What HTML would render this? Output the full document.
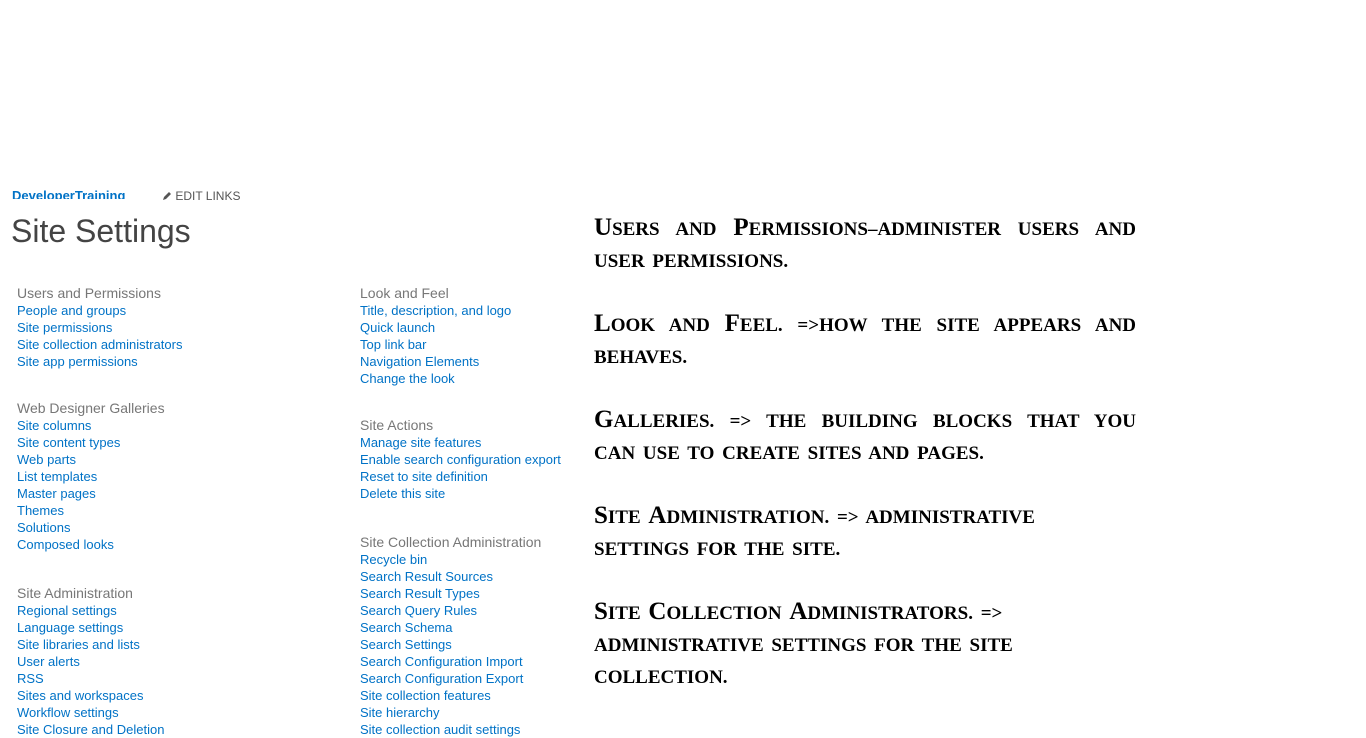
<!DOCTYPE html>
<html><head><meta charset="utf-8"><style>
body{margin:0;width:1366px;height:728px;overflow:hidden;background:#fff;font-family:"Liberation Sans",sans-serif;position:relative}
.a{position:absolute}
.col div{font-size:13px;line-height:17px;color:#0072c6;white-space:nowrap}
.col div.h{font-size:14px;color:#777;line-height:17px}
.r{position:absolute;left:594px;top:214px;width:542px;font-family:"Liberation Serif",serif;font-weight:bold;text-transform:uppercase;font-size:19px;line-height:32px;text-align:justify;color:#000;word-spacing:3px}
.r p{margin:0 0 32px 0;height:64px}
.r b{font-size:25px;line-height:1}
</style></head><body>
<div class="a" style="left:12px;top:187px;font-size:13px;color:#0072c6;font-weight:bold;height:12px;overflow:hidden;line-height:18px">DeveloperTraining</div>
<div class="a" style="left:162px;top:189px;font-size:12px;color:#555;line-height:14px"><svg width="10" height="10" style="vertical-align:-1px" viewBox="0 0 10 10"><path d="M1 9L2 6L7 1L9 3L4 8Z" fill="#555"/></svg>&nbsp;EDIT LINKS</div>
<div class="a" style="left:11px;top:211px;font-size:32px;color:#444;line-height:40px">Site Settings</div>
<div class="a col" style="left:17px;top:285px">
<div class="h">Users and Permissions</div>
<div>People and groups</div><div>Site permissions</div><div>Site collection administrators</div><div>Site app permissions</div>
<div style="height:30px"></div>
<div class="h">Web Designer Galleries</div>
<div>Site columns</div><div>Site content types</div><div>Web parts</div><div>List templates</div><div>Master pages</div><div>Themes</div><div>Solutions</div><div>Composed looks</div>
<div style="height:32px"></div>
<div class="h">Site Administration</div>
<div>Regional settings</div><div>Language settings</div><div>Site libraries and lists</div><div>User alerts</div><div>RSS</div><div>Sites and workspaces</div><div>Workflow settings</div><div>Site Closure and Deletion</div>
</div>
<div class="a col" style="left:360px;top:285px">
<div class="h">Look and Feel</div>
<div>Title, description, and logo</div><div>Quick launch</div><div>Top link bar</div><div>Navigation Elements</div><div>Change the look</div>
<div style="height:30px"></div>
<div class="h">Site Actions</div>
<div>Manage site features</div><div>Enable search configuration export</div><div>Reset to site definition</div><div>Delete this site</div>
<div style="height:32px"></div>
<div class="h">Site Collection Administration</div>
<div>Recycle bin</div><div>Search Result Sources</div><div>Search Result Types</div><div>Search Query Rules</div><div>Search Schema</div><div>Search Settings</div><div>Search Configuration Import</div><div>Search Configuration Export</div><div>Site collection features</div><div>Site hierarchy</div><div>Site collection audit settings</div>
</div>
<div class="r">
<p><b>U</b>sers and <b>P</b>ermissions–administer users and user permissions.</p>
<p><b>L</b>ook and <b>F</b>eel. =&gt;how the site appears and behaves.</p>
<p><b>G</b>alleries. =&gt; the building blocks that you can use to create sites and pages.</p>
<p style="text-align:left"><b>S</b>ite <b>A</b>dministration. =&gt; administrative<br>settings for the site.</p>
<p style="text-align:left"><b>S</b>ite <b>C</b>ollection <b>A</b>dministrators. =&gt;<br>administrative settings for the site<br>collection.</p>
</div>
</body></html>
